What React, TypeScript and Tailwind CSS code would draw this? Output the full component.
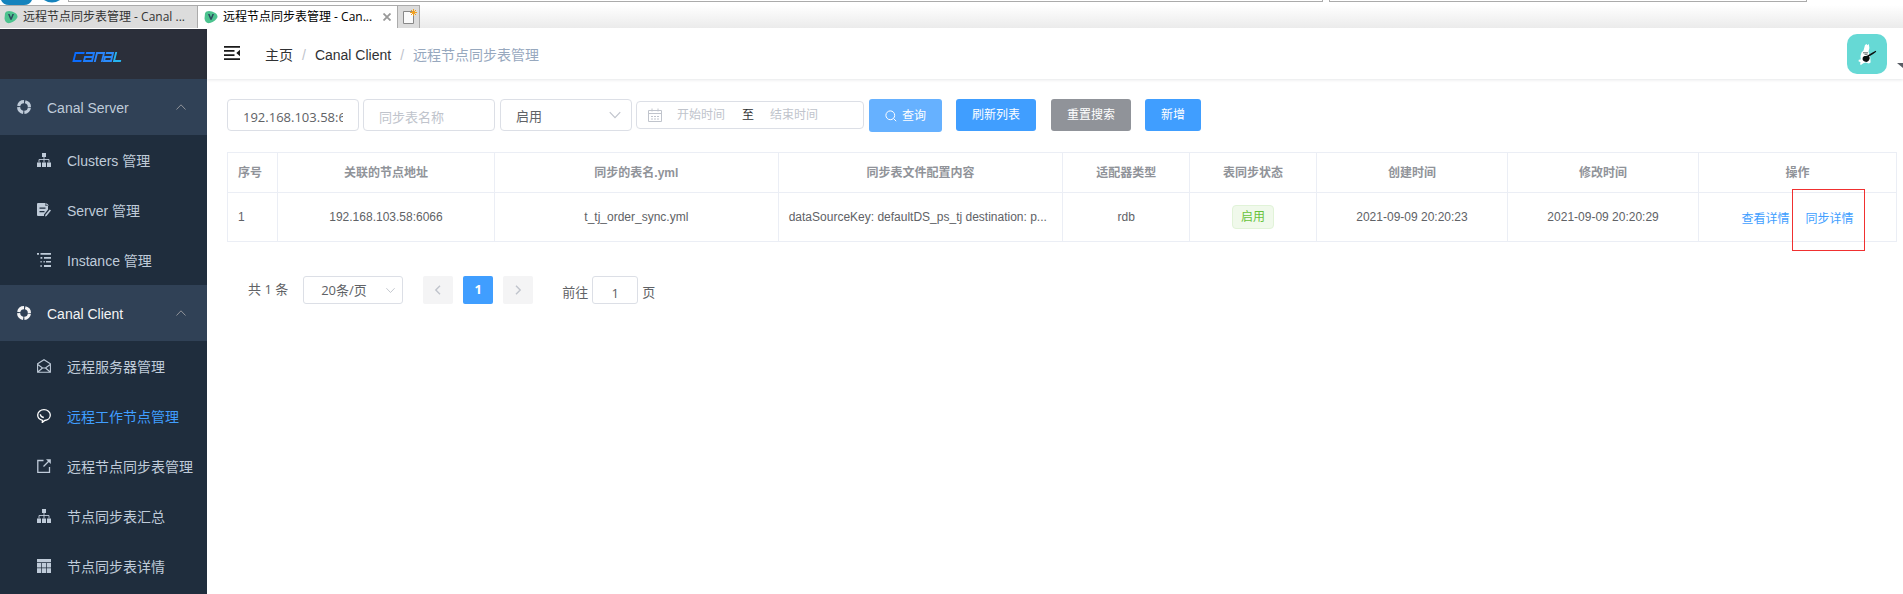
import type { ReactNode } from 'react';

const ICON = 'h-[14px] w-[14px] shrink-0';

function RingIcon() {
  return (
    <svg viewBox="0 0 14 14" className={ICON} fill="none" stroke="currentColor">
      <circle cx="7" cy="7" r="5.4" strokeWidth="3.2" strokeDasharray="7.3 1.182" strokeDashoffset="-0.59" />
    </svg>
  );
}

function TreeIcon() {
  return (
    <svg viewBox="0 0 14 14" className={ICON} fill="currentColor">
      <path d="M5 0h4v4H5zM0 9.5h4V14H0zM5 9.5h4V14H5zM10 9.5h4V14h-4z" />
      <path d="M7 4v5.5M2 9.5V6.5h10v3" fill="none" stroke="currentColor" strokeWidth="0.9" />
    </svg>
  );
}

function FormIcon() {
  return (
    <svg viewBox="0 0 14 14" className={ICON} fill="currentColor">
      <path fillRule="evenodd" d="M1 0h7.500v3H11v3.500L7 11.500v1.500H1a1 1 0 0 1-1-1V1a1 1 0 0 1 1-1zM2.500 4.500v1.200h6V4.500zM2.500 8v1.200h5V8z" />
      <path d="M9.300 0 12 2.500H9.300zM12.800 6.500l1.200 1-4.500 5.500L8 13.500l.4-1.800z" />
    </svg>
  );
}

function TreeTableIcon() {
  return (
    <svg viewBox="0 0 14 14" className={ICON} fill="currentColor">
      <path d="M0 0h2v1.800H0zM3.500 0H14v1.800H3.500zM3.500 4h1.800v1.800H3.500zM7 4h7v1.800H7zM3.500 8h1.200v1.600H3.500zM6.500 8h1.300v1.600H6.500zM9 8h5v1.600H9zM3.500 12h1.200v2H3.500zM7 12h7v2H7z" />
    </svg>
  );
}

function MailIcon() {
  return (
    <svg viewBox="0 0 14 14" className={ICON} fill="none" stroke="currentColor" strokeWidth="1.1">
      <path d="M.6 4.700 7 .7l6.400 4v8.600H.6zM.8 5.500 5.500 9h3l4.700-3.500M.8 13 5.500 9M13.200 13 8.500 9" />
    </svg>
  );
}

function ChatIcon() {
  return (
    <svg viewBox="0 0 14 14" className={ICON} fill="none" stroke="currentColor" strokeWidth="1.3">
      <path d="M5.500 11.300C2.600 10.700.7 8.700.7 6.100.7 3.100 3.500.7 7 .7s6.300 2.400 6.300 5.400-2.500 5.200-5.600 5.400L5.300 13.500z" />
      <path d="M3.300 5.200c.2 1.800 1.500 3 3.500 3.300" />
    </svg>
  );
}

function LinkOutIcon() {
  return (
    <svg viewBox="0 0 14 14" className={ICON} fill="none" stroke="currentColor" strokeWidth="1.3">
      <path d="M6.500 1.500H.8v11.800h11.700V8M6.500 7.500l6-6" />
      <path d="M9 .2h4.800V5z" fill="currentColor" stroke="none" />
    </svg>
  );
}

function GridIcon() {
  return (
    <svg viewBox="0 0 14 14" className={ICON} fill="currentColor">
      <path d="M0 0h14v3.200H0zM0 4h4.200v4.500H0zM4.900 4h4.200v4.500H4.900zM9.800 4H14v4.500H9.800zM0 9.200h4.200V14H0zM4.900 9.200h4.200V14H4.900zM9.800 9.200H14V14H9.800z" />
    </svg>
  );
}

function Chevron({ className, d }: { className: string; d: string }) {
  return (
    <svg viewBox="0 0 12 12" className={className} fill="none" stroke="currentColor">
      <path d={d} />
    </svg>
  );
}

const UP = 'M1.500 8.500 6 3.800l4.500 4.700';
const DOWN = 'M1.500 3.500 6 8.200l4.500-4.700';
const LEFT = 'M8 1.800 3.800 6 8 10.200';
const RIGHT = 'M4 1.800 8.200 6 4 10.200';

function VueBadge() {
  return (
    <svg viewBox="0 0 14 14" className="h-[14px] w-[14px] shrink-0">
      <path d="M1 3.500C2 .8 5 .6 8 1.500s5.800 3 5.500 5.300S9.500 12.300 6 13 .8 11.500.5 8.500z" fill="#4cc38f" />
      <path d="M4 4h1.600L7 7.500 8.400 4H10L7.700 9.800H6.300z" fill="#2c4a5e" />
    </svg>
  );
}

function BrowserBar() {
  return (
    <div className="flex h-[29px] flex-col overflow-hidden border-b border-white bg-white font-['Open_Sans','Noto_Sans_CJK_SC',sans-serif]">
      <div className="flex h-[5px] shrink-0">
        <svg viewBox="0 0 68 5" className="h-[5px] w-[68px] shrink-0">
          <path d="M1 0h31q-2 5-8 5H9Q3 5 1 0z" fill="#1583bd" />
          <path d="M44 0h16q-8 5-16 0z" fill="#1583bd" />
        </svg>
        <div className="h-[2px] w-[1255px] border-x border-b border-[#ababab]" />
        <div className="ml-[6px] h-[2px] w-[416px] shrink-0 grow border-x border-b border-[#ababab]" />
        <div className="w-[96px] shrink-0" />
      </div>
      <div className="flex h-[23px] bg-linear-to-b from-white to-[#ebebeb] text-[12px] leading-[22px] text-black">
        <div className="flex w-[198px] items-center gap-[5px] overflow-hidden border-t border-r border-[#ababab] bg-[#dcdcdc] pl-1 whitespace-nowrap text-[#333]">
          <VueBadge />
          <span>远程节点同步表管理 - Canal ...</span>
        </div>
        <div className="flex w-[200px] items-center gap-[5px] overflow-hidden border-t border-r border-[#ababab] bg-white pl-[6px] whitespace-nowrap">
          <VueBadge />
          <span>远程节点同步表管理 - Can...</span>
          <button type="button" aria-label="close" className="ml-auto mr-[6px]">
            <svg viewBox="0 0 8 8" className="h-2 w-2" stroke="#999" strokeWidth="1.8">
              <path d="M.5.5l7 7M7.500.5l-7 7" />
            </svg>
          </button>
        </div>
        <button type="button" aria-label="new tab" className="flex w-[22px] items-center justify-center border-t border-r border-[#ababab] bg-[#dcdcdc]">
          <svg viewBox="0 0 16 16" className="h-4 w-4">
            <path d="M2.500 2.500h10v12h-10z" fill="#fafafa" stroke="#888" />
            <path d="M12.500 0v7M9 3.500h7M10 1l5 5M15 1l-5 5" stroke="#f0a020" strokeWidth="1" />
          </svg>
        </button>
      </div>
    </div>
  );
}

function Group({ title, active, children }: { title: string; active?: boolean; children: ReactNode }) {
  return (
    <li>
      <button
        type="button"
        className={`flex h-[56px] w-full items-center bg-[#304156] pr-5 pl-[17px] text-[14px] ${active ? 'text-[#f4f4f5]' : 'text-[#bfcbd9]'}`}
      >
        <RingIcon />
        <span className="ml-4 pt-[2px]">{title}</span>
        <Chevron className="ml-auto h-3 w-3 text-[#909399]" d={UP} />
      </button>
      <ul>{children}</ul>
    </li>
  );
}

function Item({ icon, label, active }: { icon: ReactNode; label: string; active?: boolean }) {
  return (
    <li>
      <a href="#" className="flex h-[50px] items-center gap-4 bg-[#1f2d3d] pl-[37px] text-[14px] whitespace-nowrap text-[#bfcbd9]">
        <span className={active ? 'text-white' : ''}>{icon}</span>
        <span className={active ? 'pt-[2px] text-[#409eff]' : 'pt-[2px]'}>{label}</span>
      </a>
    </li>
  );
}

function Sidebar() {
  return (
    <nav className="w-[207px] shrink-0 bg-[#1f2d3d]">
      <div className="flex h-[50px] items-center justify-center bg-[#2b2f3a] pt-[5px] pr-[14px]">
        <svg viewBox="0 0 50 12" className="h-3 w-[50px]" fill="none" strokeWidth="1.9" role="img" aria-label="canal">
          <g transform="translate(2.500 0) skewX(-14)">
            <path d="M10.500 2H1.500v8h8" stroke="#0a6cff" />
            <path d="M12 2h8v8h-8V6h8" stroke="#1d7dfd" />
            <path d="M23 11V2h7v9" stroke="#2b86fb" />
            <path d="M32 2h7v8h-7V6h7" stroke="#2b8cfb" />
            <path d="M42 1v9h7" stroke="#27b4f0" />
          </g>
        </svg>
      </div>
      <ul>
        <Group title="Canal Server">
          <Item icon={<TreeIcon />} label="Clusters 管理" />
          <Item icon={<FormIcon />} label="Server 管理" />
          <Item icon={<TreeTableIcon />} label="Instance 管理" />
        </Group>
        <Group title="Canal Client" active>
          <Item icon={<MailIcon />} label="远程服务器管理" />
          <Item icon={<ChatIcon />} label="远程工作节点管理" active />
          <Item icon={<LinkOutIcon />} label="远程节点同步表管理" />
          <Item icon={<TreeIcon />} label="节点同步表汇总" />
          <Item icon={<GridIcon />} label="节点同步表详情" />
        </Group>
      </ul>
    </nav>
  );
}

function Navbar() {
  return (
    <header className="flex h-[50px] items-center pl-[17px] shadow-[0_1px_3px_rgba(0,21,41,0.1)]">
      <button type="button" aria-label="toggle sidebar" className="mb-[2px]">
        <svg viewBox="0 0 16 14" className="block h-[14px] w-4" fill="#1a1a1a">
          <path d="M0 0h16v1.700H0zM0 4.100h10.500v1.700H0zM0 8.200h10.500v1.700H0zM0 12.300h16V14H0zM16 3.800v6.400L12.300 7z" />
        </svg>
      </button>
      <nav className="ml-[25px] flex items-center gap-[9px] pt-[2px] text-[14px] text-[#303133]">
        <a href="#">主页</a>
        <span className="text-[#c0c4cc]">/</span>
        <a href="#">Canal Client</a>
        <span className="text-[#c0c4cc]">/</span>
        <span className="text-[#97a8be]">远程节点同步表管理</span>
      </nav>
      <button type="button" aria-label="account" className="ml-auto flex items-center gap-[10px]">
        <svg viewBox="0 0 40 40" className="h-10 w-10">
          <rect width="40" height="40" rx="10" fill="#66d9d5" />
          <path d="M18 11l1.700-1 .6 1.200 1.500-1.200.6 4-.9 3.500.8 3 1 3 .3 5-1.800 1-3-1-2.500.8-2 1.500-1.300-.3.500-2.200-2-1 .3-1.500 2-.3-.3-3.500 1-3.500 2-2z" fill="#fff" />
          <path d="M16 18.800h5M17.500 20.300h3" stroke="#3a4646" strokeWidth=".8" />
          <path d="M15.600 24.500c0-2 1.600-2.400 3-2.400l1.400-.4 5.500-3.300 3.300-1.700.4 1-3 2.200-4.200 2.500c1 1 .8 2 .3 3.200-.6 1.700-2.300 2.600-4 2.200-1.900-.4-2.900-1.700-2.700-3.300z" fill="#0b1212" />
        </svg>
        <svg viewBox="0 0 6 5" className="mt-[22px] h-[5px] w-[6px]">
          <path d="M0 0h6v5z" fill="#5a5e66" />
        </svg>
      </button>
    </header>
  );
}

const FIELD = "h-8 w-[132px] rounded-[4px] border border-[#dcdfe6] bg-white pt-1 font-['Open_Sans','Noto_Sans_CJK_SC',sans-serif] text-[13px] text-[#606266] outline-none";

function Filters() {
  return (
    <form className="flex items-start text-[12px]">
      <input aria-label="节点地址" defaultValue="192.168.103.58:6066" className={`${FIELD} px-[15px]`} />
      <input aria-label="同步表名称" placeholder="同步表名称" className={`${FIELD} ml-1 px-[15px] placeholder:text-[#c0c4cc]`} />
      <div className="relative ml-[5px]">
        <select aria-label="状态" className={`${FIELD} block appearance-none px-[15px]`}>
          <option>启用</option>
        </select>
        <Chevron className="pointer-events-none absolute top-[9px] right-[10px] h-[14px] w-[14px] text-[#c0c4cc]" d={DOWN} />
      </div>
      <div className="mt-[2px] ml-1 flex h-7 w-[228px] items-center rounded-[4px] border border-[#dcdfe6] pl-[11px]">
        <svg viewBox="0 0 14 14" className="h-[14px] w-[14px]" fill="none" stroke="#c0c4cc">
          <path d="M.5 2.500h13v11H.5zM.5 5.500h13M4 .5v3M10 .5v3M3 8.500h2M6 8.500h2M9 8.500h2M3 11h2M6 11h2M9 11h2" />
        </svg>
        <input aria-label="开始时间" placeholder="开始时间" className="w-[78px] text-center outline-none placeholder:text-[#c0c4cc]" />
        <span className="w-4 text-center text-[#303133]">至</span>
        <input aria-label="结束时间" placeholder="结束时间" className="w-[76px] text-center outline-none placeholder:text-[#c0c4cc]" />
      </div>
      <button type="button" className="ml-[5px] flex h-[33px] w-[73px] items-center justify-center gap-[5px] rounded-[3px] bg-[#66b1ff] text-white">
        <svg viewBox="0 0 12 12" className="h-3 w-3" fill="none" stroke="currentColor">
          <circle cx="5.3" cy="5.3" r="4.4" />
          <path d="m8.500 8.500 2.700 2.700" />
        </svg>
        查询
      </button>
      <button type="button" className="ml-[14px] h-8 w-20 rounded-[3px] bg-[#409eff] text-white">刷新列表</button>
      <button type="button" className="ml-[15px] h-8 w-20 rounded-[3px] bg-[#909399] text-white">重置搜索</button>
      <button type="button" className="ml-[14px] h-8 w-[56px] rounded-[3px] bg-[#409eff] text-white">新增</button>
    </form>
  );
}

const HEADS = ['序号', '关联的节点地址', '同步的表名.yml', '同步表文件配置内容', '适配器类型', '表同步状态', '创建时间', '修改时间', '操作'];
const CELL = 'border border-[#ebeef5] px-[10px]';

function SyncTable() {
  return (
    <table className="mt-5 w-full table-fixed border-collapse text-center text-[12px] text-[#606266]">
      <colgroup>
        <col className="w-[50px]" />
        <col className="w-[13%]" />
        <col className="w-[17%]" />
        <col className="w-[17.05%]" />
        <col className="w-[7.6%]" />
        <col className="w-[7.6%]" />
        <col className="w-[11.45%]" />
        <col className="w-[11.45%]" />
        <col />
      </colgroup>
      <thead>
        <tr className="h-10 text-[#909399]">
          {HEADS.map((head, i) => (
            <th key={head} className={i === 0 ? `${CELL} text-left font-bold` : `${CELL} font-bold`}>{head}</th>
          ))}
        </tr>
      </thead>
      <tbody>
        <tr className="h-[49px]">
          <td className={`${CELL} text-left`}>1</td>
          <td className={CELL}>192.168.103.58:6066</td>
          <td className={CELL}>t_tj_order_sync.yml</td>
          <td className={`${CELL} text-left whitespace-nowrap`}>dataSourceKey: defaultDS_ps_tj destination: p...</td>
          <td className={CELL}>rdb</td>
          <td className={CELL}>
            <span className="inline-block h-6 rounded-[4px] border border-[#e1f3d8] bg-[#f0f9eb] px-2 leading-[22px] text-[#67c23a]">启用</span>
          </td>
          <td className={CELL}>2021-09-09 20:20:23</td>
          <td className={CELL}>2021-09-09 20:20:29</td>
          <td className={CELL}>
            <div className="flex justify-center gap-4 pt-1 text-[#409eff]">
              <a href="#">查看详情</a>
              <a href="#" className="relative">
                同步详情
                <span className="absolute -top-[21px] -left-[14px] h-[62px] w-[73px] border border-[#f03030]" />
              </a>
            </div>
          </td>
        </tr>
      </tbody>
    </table>
  );
}

function Pagination() {
  return (
    <div className="mt-[34px] flex h-7 items-center pl-[21px] font-['Open_Sans','Noto_Sans_CJK_SC',sans-serif] text-[13px] text-[#606266]">
      <span>共 1 条</span>
      <div className="relative ml-[15px]">
        <select aria-label="每页条数" className="block h-7 w-[100px] appearance-none rounded-[3px] border border-[#dcdfe6] bg-white pt-[2px] pl-[17px] outline-none">
          <option>20条/页</option>
        </select>
        <Chevron className="pointer-events-none absolute top-[9px] right-[7px] h-[11px] w-[11px] text-[#c0c4cc]" d={DOWN} />
      </div>
      <button type="button" aria-label="上一页" className="ml-5 flex h-7 w-[30px] items-center justify-center rounded-[2px] bg-[#f4f4f5] text-[#c0c4cc]">
        <Chevron className="h-3 w-3 stroke-[1.4]" d={LEFT} />
      </button>
      <button type="button" className="ml-[10px] h-7 w-[30px] rounded-[2px] bg-[#409eff] font-bold text-white">1</button>
      <button type="button" aria-label="下一页" className="ml-[10px] flex h-7 w-[30px] items-center justify-center rounded-[2px] bg-[#f4f4f5] text-[#c0c4cc]">
        <Chevron className="h-3 w-3 stroke-[1.4]" d={RIGHT} />
      </button>
      <label htmlFor="jump" className="ml-[29px] pt-[6px]">前往</label>
      <input id="jump" defaultValue="1" className="mx-1 h-7 w-[46px] rounded-[3px] border border-[#dcdfe6] pt-[6px] text-center outline-none" />
      <span className="pt-[6px]">页</span>
    </div>
  );
}

export default function App() {
  return (
    <div className="flex h-screen flex-col overflow-hidden bg-white font-['Liberation_Sans','Noto_Sans_CJK_SC',sans-serif]">
      <BrowserBar />
      <div className="flex min-h-0 flex-1 overflow-hidden">
        <Sidebar />
        <div className="min-w-0 flex-1">
          <Navbar />
          <main className="pt-5 pr-[6px] pl-5">
            <Filters />
            <SyncTable />
            <Pagination />
          </main>
        </div>
      </div>
    </div>
  );
}
